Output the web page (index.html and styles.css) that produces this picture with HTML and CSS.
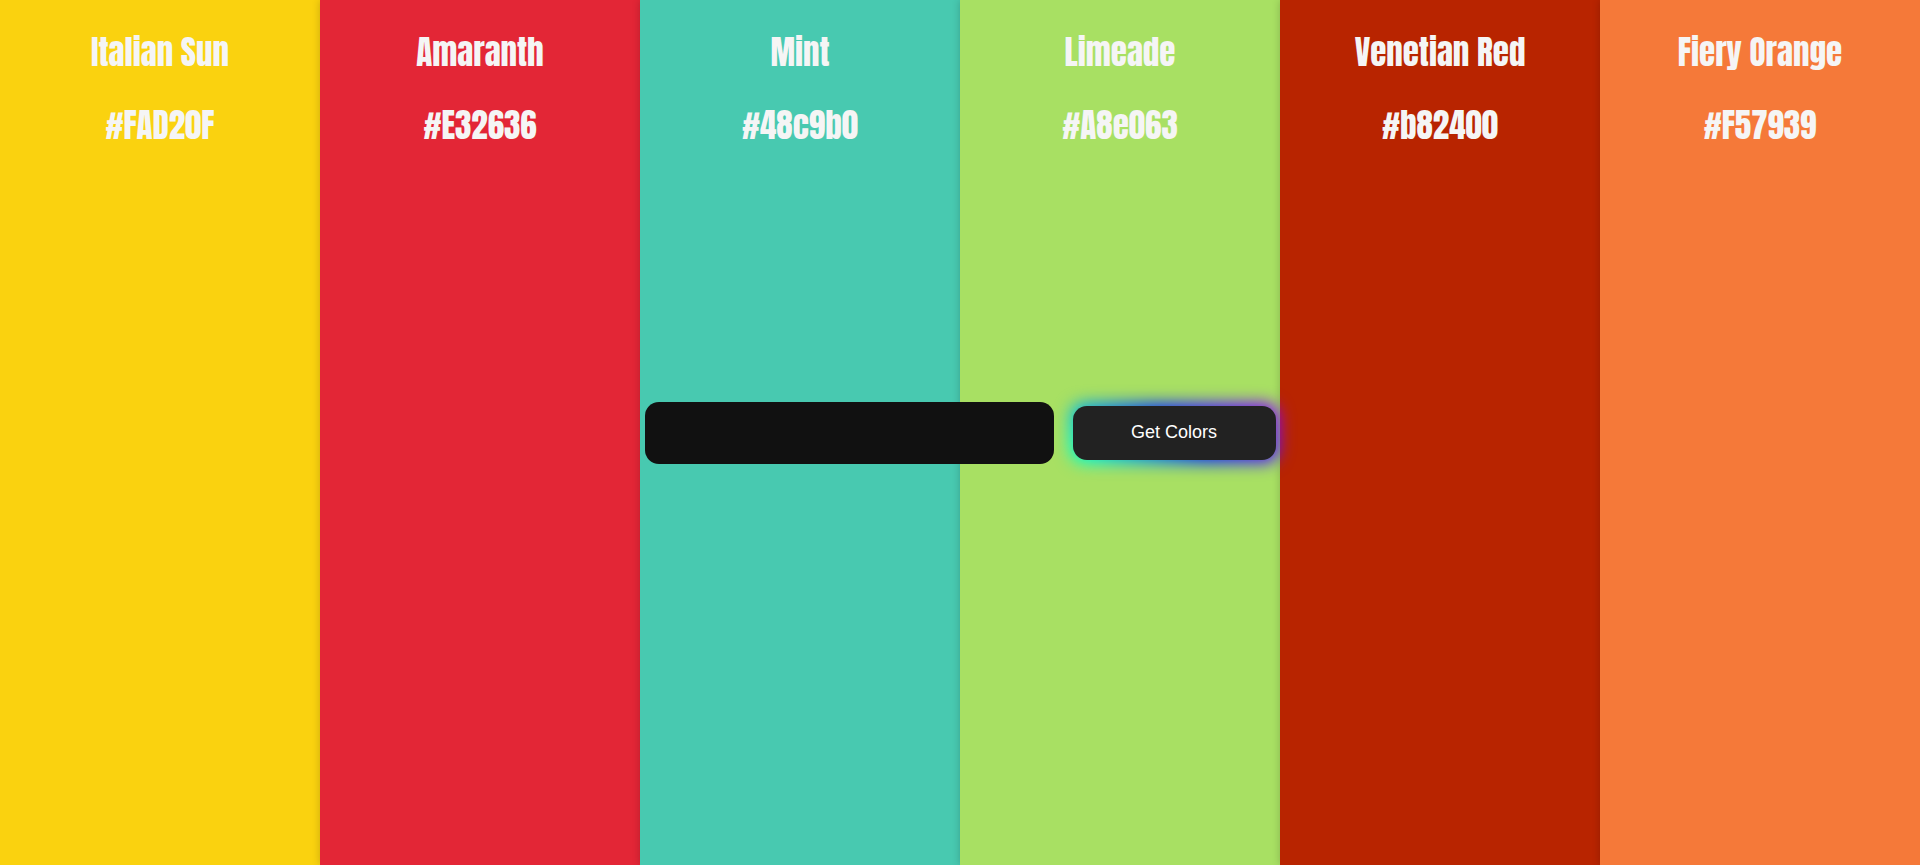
FILE: index.html
```html
<!DOCTYPE html>
<html lang="en">
<head>
<meta charset="utf-8">
<meta name="viewport" content="width=device-width, initial-scale=1">
<title>Colors</title>
<link rel="stylesheet" href="styles.css">
</head>
<body>
<main class="page">
  <div class="palette">
    <section class="swatch sun"><h2 class="name">Italian Sun</h2><p class="code">#FAD20F</p></section>
    <section class="swatch amaranth"><h2 class="name">Amaranth</h2><p class="code">#E32636</p></section>
    <section class="swatch mint"><h2 class="name">Mint</h2><p class="code">#48c9b0</p></section>
    <section class="swatch limeade"><h2 class="name">Limeade</h2><p class="code">#A8e063</p></section>
    <section class="swatch venetian"><h2 class="name">Venetian Red</h2><p class="code">#b82400</p></section>
    <section class="swatch orange"><h2 class="name">Fiery Orange</h2><p class="code">#F57939</p></section>
  </div>
  <form class="search">
    <input class="query" type="text" aria-label="Color search">
    <button class="submit" type="button">Get Colors</button>
  </form>
</main>
</body>
</html>
```

FILE: styles.css
```css
* { box-sizing: border-box; }

body { margin: 0; }

.page {
  display: grid;
  grid-template-areas: "stage";
  min-height: 100vh;
  overflow: hidden;
}

.palette {
  grid-area: stage;
  display: grid;
  grid-template-columns: repeat(6, 1fr);
}

.swatch {
  display: flex;
  flex-direction: column;
  align-items: center;
  gap: 33px;
  padding-top: 32px;
  box-shadow: 0 0 8px rgba(0, 0, 0, 0.2);
  color: #f5f5f5;
  font-family: Anton, Impact, "Liberation Sans", sans-serif;
  line-height: 40px;
  text-align: center;
}

.name, .code {
  margin: 0;
  font-size: 33px;
  font-weight: normal;
}

.sun { background: #fad20f; }
.amaranth { background: #e32636; }
.mint { background: #48c9b0; }
.limeade { background: #a8e063; }
.venetian { background: #b82400; }
.orange { background: #f57939; }

.search {
  grid-area: stage;
  place-self: center;
  display: flex;
  align-items: center;
  gap: 19px;
  z-index: 1;
}

.query {
  width: 409px;
  height: 62px;
  padding: 0 20px;
  border: 0;
  border-radius: 14px;
  background: #111;
  color: #fff;
  font: 18px "Liberation Sans", Arial, sans-serif;
}

.submit {
  position: relative;
  isolation: isolate;
  width: 203px;
  height: 54px;
  border: 0;
  border-radius: 14px;
  background: none;
  color: #fff;
  font: 18px "Liberation Sans", Arial, sans-serif;
}

.submit::before,
.submit::after {
  content: "";
  position: absolute;
  inset: 0;
  z-index: -1;
  border-radius: 14px;
  background: #222;
}

.submit::before {
  inset: -3px;
  background: linear-gradient(45deg, #12ff9c, #00ffd5 8%, #002bff 52%, #7a00ff 90%, #9c00f0);
  filter: blur(8px);
}
```
